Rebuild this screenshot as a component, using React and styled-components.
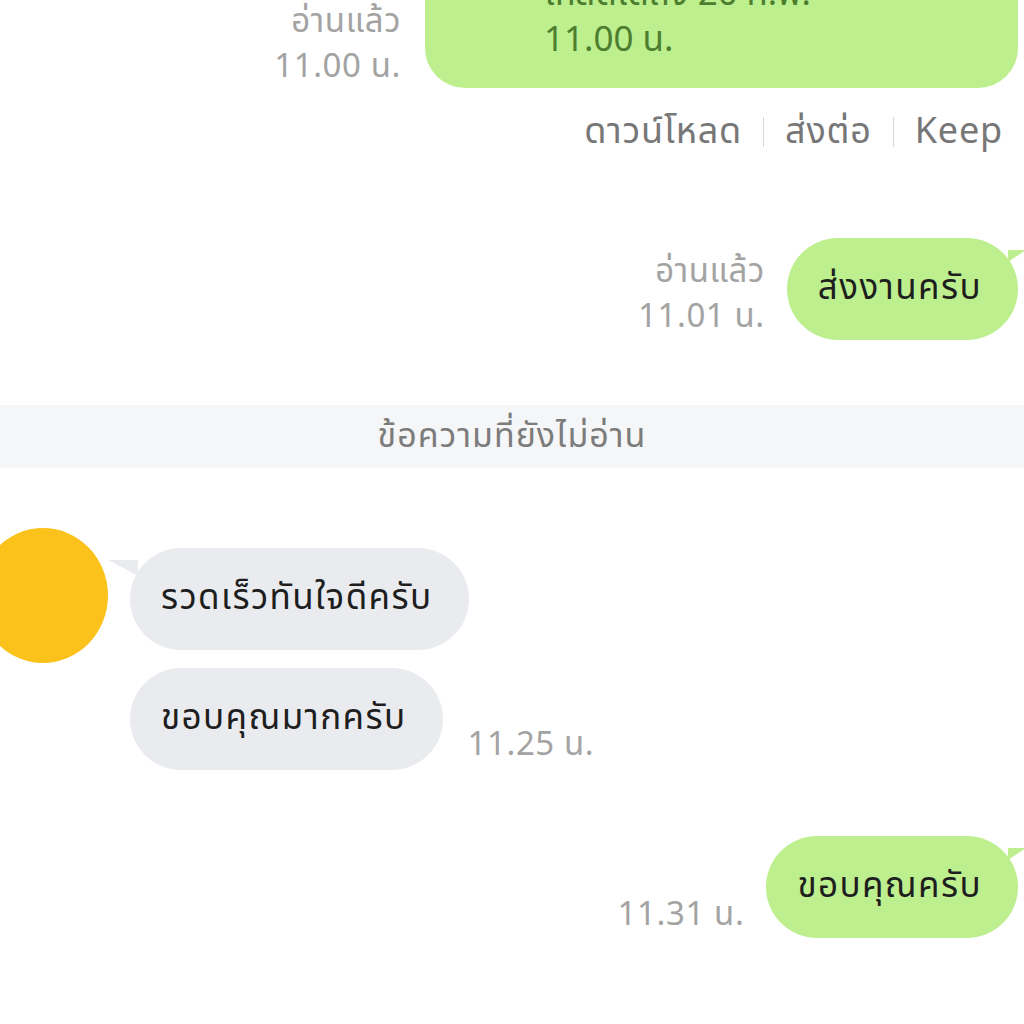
import styled, { createGlobalStyle } from "styled-components";

const GlobalStyle = createGlobalStyle`
  html, body {
    margin: 0;
    padding: 0;
    background: #ffffff;
    overflow: hidden;
  }
  body {
    font-family: "Noto Sans Thai", "Noto Sans", "DejaVu Sans", sans-serif;
  }
`;

const Page = styled.div`
  width: 1024px;
  height: 1024px;
  overflow: hidden;
  display: flex;
  flex-direction: column;
`;

const Row = styled.div`
  display: flex;
  align-items: flex-end;
  justify-content: ${(p) => (p.$mine ? "flex-end" : "flex-start")};
  gap: ${(p) => p.$gap || 22}px;
  padding-right: ${(p) => (p.$mine ? 6 : 0)}px;
  margin-top: ${(p) => p.$top || 0}px;
`;

const Meta = styled.div`
  display: flex;
  flex-direction: column;
  align-items: flex-end;
  font-size: 33px;
  letter-spacing: 0.6px;
  line-height: 45px;
  color: #a3a3a3;
  margin-bottom: ${(p) => p.$drop || 0}px;
`;

const Bubble = styled.div`
  position: relative;
  background: ${(p) => (p.$mine ? "#bdef8e" : "#e9ebef")};
  color: #1e1e1e;
  font-size: 35px;
  letter-spacing: 1.4px;
  line-height: 46px;
  padding: 28px 36px 28px 31px;
  border-radius: 52px;
  white-space: nowrap;
`;

const TailRight = styled.span`
  position: absolute;
  top: 12px;
  right: -8px;
  width: 0;
  height: 0;
  border-left: 18px solid #bdef8e;
  border-bottom: 12px solid transparent;
`;

const TailLeft = styled.span`
  position: absolute;
  top: 12px;
  left: -22px;
  width: 0;
  height: 0;
  border-right: 30px solid #e9ebef;
  border-bottom: 16px solid transparent;
`;

const FileBubble = styled.div`
  width: 593px;
  box-sizing: border-box;
  margin-top: -54px;
  background: #bdef8e;
  color: #4d7d2e;
  font-size: 35px;
  line-height: 46px;
  padding: 24px 30px 24px 119px;
  border-radius: 40px;
`;

const Actions = styled.div`
  display: flex;
  justify-content: flex-end;
  align-items: center;
  margin-top: 22px;
  padding-right: 21px;
  font-size: 36px;
  letter-spacing: 0.8px;
  line-height: 44px;
  color: #777777;
`;

const Sep = styled.span`
  display: inline-block;
  width: 1px;
  height: 30px;
  background: #d8d8d8;
  margin: 0 21px;
`;

const Divider = styled.div`
  margin-top: 65px;
  height: 63px;
  background: #f5f6f8;
  display: flex;
  align-items: center;
  justify-content: center;
  font-size: 34px;
  letter-spacing: 1px;
  color: #7c7c7c;
`;

const Group = styled.div`
  display: flex;
  align-items: flex-start;
  margin-top: 60px;
`;

const Avatar = styled.div`
  width: 130px;
  height: 135px;
  border-radius: 50%;
  background: #fbc21b;
  margin-left: -22px;
  flex-shrink: 0;
`;

const Stack = styled.div`
  display: flex;
  flex-direction: column;
  align-items: flex-start;
  gap: 18px;
  margin-top: 20px;
  margin-left: 22px;
`;

const Time = styled.span`
  font-size: 33px;
  letter-spacing: 0.6px;
  line-height: 45px;
  color: #a3a3a3;
  margin-bottom: 2px;
`;

export default function App() {
  return (
    <Page>
      <GlobalStyle />
      <Row $mine $gap={24}>
        <Meta $drop={-2}>
          <span>อ่านแล้ว</span>
          <span>11.00 น.</span>
        </Meta>
        <FileBubble>
          <div>โหลดได้ถึง 20 ก.พ.</div>
          <div>11.00 น.</div>
        </FileBubble>
      </Row>
      <Actions>
        <span>ดาวน์โหลด</span>
        <Sep />
        <span>ส่งต่อ</span>
        <Sep />
        <span>Keep</span>
      </Actions>

      <Row $mine $top={84}>
        <Meta>
          <span>อ่านแล้ว</span>
          <span>11.01 น.</span>
        </Meta>
        <Bubble $mine>
          ส่งงานครับ
          <TailRight />
        </Bubble>
      </Row>

      <Divider>ข้อความที่ยังไม่อ่าน</Divider>

      <Group>
        <Avatar />
        <Stack>
          <Bubble>
            รวดเร็วทันใจดีครับ
            <TailLeft />
          </Bubble>
          <Row $gap={25}>
            <Bubble>ขอบคุณมากครับ</Bubble>
            <Time>11.25 น.</Time>
          </Row>
        </Stack>
      </Group>

      <Row $mine $top={66}>
        <Meta>
          <span>11.31 น.</span>
        </Meta>
        <Bubble $mine>
          ขอบคุณครับ
          <TailRight />
        </Bubble>
      </Row>
    </Page>
  );
}
